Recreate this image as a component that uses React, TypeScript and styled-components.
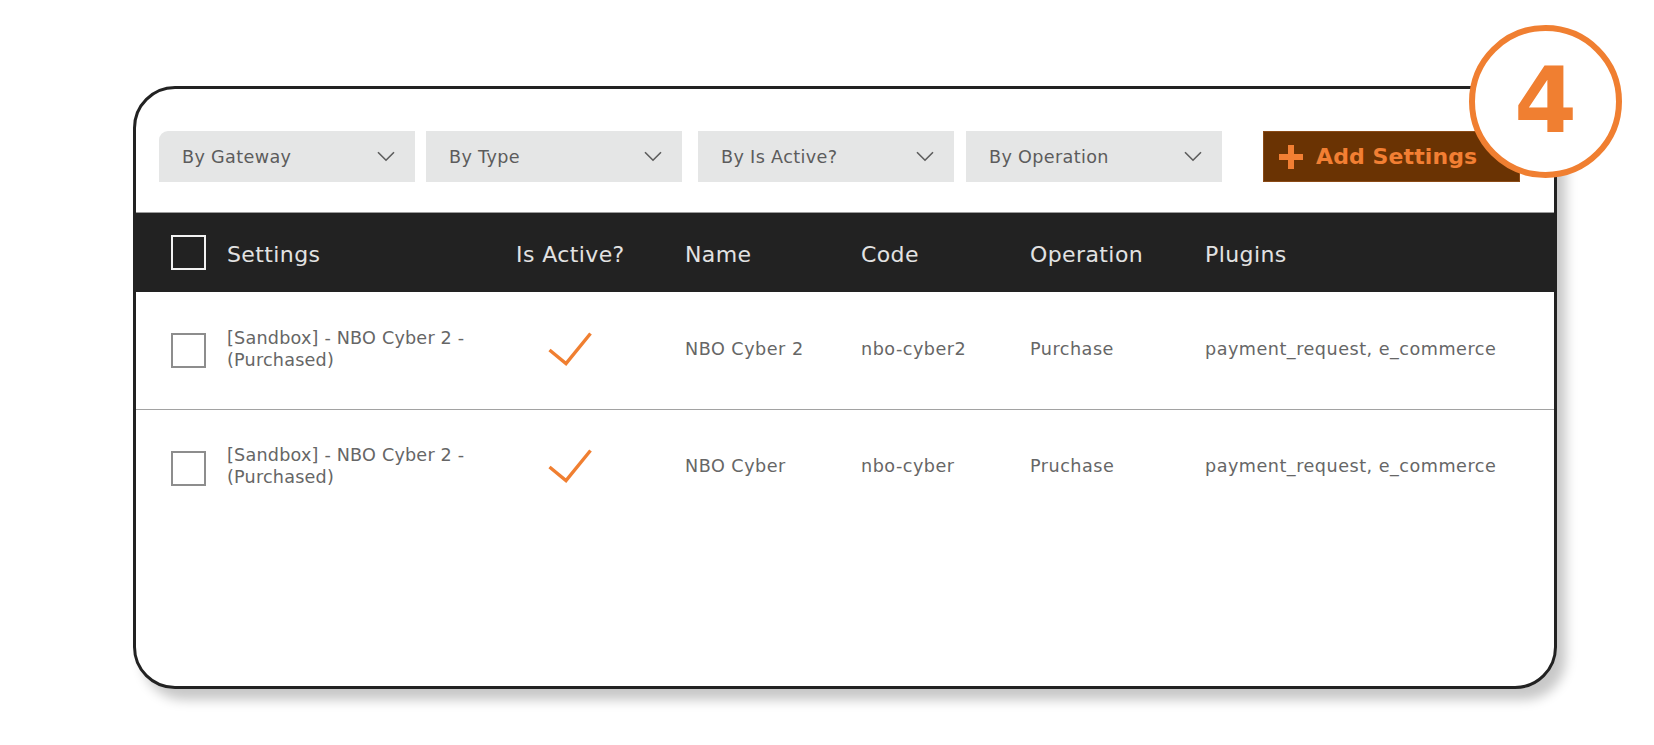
import React from "react";
import styled, { createGlobalStyle } from "styled-components";

const GlobalStyle = createGlobalStyle`
  html, body { margin: 0; padding: 0; background: #ffffff; }
  body { font-family: "DejaVu Sans", "Noto Sans", sans-serif; }
  * { box-sizing: border-box; }
`;

const Page = styled.div`
  width: 1654px;
  height: 745px;
  padding: 86px 0 0 133px;
  background: #ffffff;
`;

const Card = styled.div`
  position: relative;
  width: 1424px;
  height: 603px;
  border: 3px solid #222222;
  border-radius: 42px;
  background: #ffffff;
  box-shadow: 9px 11px 12px rgba(0, 0, 0, 0.22);
  display: flex;
  flex-direction: column;
`;

const Toolbar = styled.div`
  display: flex;
  align-items: stretch;
  height: 51px;
  margin: 42px 0 30px 23px;
`;

const Filter = styled.div<{ $offset: number; $first?: boolean }>`
  width: 256px;
  margin-left: ${(p) => p.$offset}px;
  background: #e5e6e6;
  border-top-left-radius: ${(p) => (p.$first ? "9px" : "0")};
  display: flex;
  align-items: center;
  justify-content: space-between;
  padding: 0 20px 0 23px;
  font-size: 17.6px;
  color: #5c5c5c;
  letter-spacing: 0.35px;
`;

const AddButton = styled.button`
  width: 257px;
  margin-left: 41px;
  background: #6a3303;
  border: 1px solid #8a4a16;
  display: flex;
  align-items: center;
  gap: 13px;
  padding: 0 0 0 15px;
  color: #f27f33;
  font-family: "DejaVu Sans", "Noto Sans", sans-serif;
  font-weight: 700;
  font-size: 22px;
  letter-spacing: 0.1px;
  cursor: pointer;
`;

const Badge = styled.div`
  position: absolute;
  left: 1333px;
  top: -64px;
  width: 153px;
  height: 153px;
  border-radius: 50%;
  border: 6.5px solid #f07f31;
  background: #ffffff;
  display: flex;
  align-items: center;
  justify-content: center;
  color: #f07f31;
  font-family: "DejaVu Sans", "Noto Sans", sans-serif;
  font-weight: 700;
  font-size: 90px;
  line-height: 1;
  padding-bottom: 2px;
`;

const columns = "56px 289px 169px 176px 169px 175px 1fr";

const HeaderRow = styled.div`
  display: grid;
  grid-template-columns: ${columns};
  align-items: center;
  height: 80px;
  padding-left: 35px;
  background: #222222;
  border-top: 1px solid #9c9c9c;
  color: #e2e2e2;
  font-size: 22px;
  letter-spacing: 0.4px;
`;

const HeadCell = styled.span`
  padding-top: 3px;
`;

const BodyRow = styled.div`
  display: grid;
  grid-template-columns: ${columns};
  align-items: center;
  height: 117px;
  padding-left: 35px;
  color: #666666;
  font-size: 17.6px;
  letter-spacing: 0.5px;
  & + & {
    border-top: 1.5px solid #a2a2a2;
  }
`;

const Cell = styled.div`
  padding-bottom: 4px;
  white-space: nowrap;
`;

const Box = styled.span<{ $light?: boolean }>`
  display: block;
  width: 35px;
  height: 35px;
  border: 2px solid ${(p) => (p.$light ? "#f2f2f2" : "#8d8d8d")};
`;

const TwoLine = styled.div`
  padding-bottom: 4px;
  line-height: 22px;
  letter-spacing: 0.2px;
`;

const CheckCell = styled.div`
  padding-left: 32px;
  padding-bottom: 4px;
  display: flex;
  align-items: center;
`;

const Chevron = () => (
  <svg width="18" height="11" viewBox="0 0 18 11" fill="none">
    <path d="M1 1.2 L9 9.2 L17 1.2" stroke="#5c5c5c" strokeWidth="1.6" />
  </svg>
);

const Check = () => (
  <svg width="44" height="34" viewBox="0 0 44 34" fill="none">
    <path d="M1.5 18 L18 31.5 L42.5 1.5" stroke="#f07f31" strokeWidth="3.4" />
  </svg>
);

const Plus = () => (
  <svg width="24" height="24" viewBox="0 0 24 24">
    <rect x="9" y="0" width="6" height="24" fill="#f27f33" />
    <rect x="0" y="9" width="24" height="6" fill="#f27f33" />
  </svg>
);

const rows = [
  { name: "NBO Cyber 2", code: "nbo-cyber2", op: "Purchase" },
  { name: "NBO Cyber", code: "nbo-cyber", op: "Pruchase" },
];

const filters = [
  { label: "By Gateway", offset: 0 },
  { label: "By Type", offset: 11 },
  { label: "By Is Active?", offset: 16 },
  { label: "By Operation", offset: 12 },
];

const headers = ["Settings", "Is Active?", "Name", "Code", "Operation", "Plugins"];

export default function App() {
  return (
    <>
      <GlobalStyle />
      <Page>
        <Card>
          <Toolbar>
            {filters.map((f, i) => (
              <Filter key={f.label} $offset={f.offset} $first={i === 0}>
                <span>{f.label}</span>
                <Chevron />
              </Filter>
            ))}
            <AddButton>
              <Plus />
              <span>Add Settings</span>
            </AddButton>
          </Toolbar>
          <HeaderRow>
            <Box $light />
            {headers.map((h) => (
              <HeadCell key={h}>{h}</HeadCell>
            ))}
          </HeaderRow>
          {rows.map((r) => (
            <BodyRow key={r.code}>
              <Box />
              <TwoLine>
                [Sandbox] - NBO Cyber 2 -<br />
                (Purchased)
              </TwoLine>
              <CheckCell>
                <Check />
              </CheckCell>
              <Cell>{r.name}</Cell>
              <Cell>{r.code}</Cell>
              <Cell>{r.op}</Cell>
              <Cell>payment_request, e_commerce</Cell>
            </BodyRow>
          ))}
          <Badge>4</Badge>
        </Card>
      </Page>
    </>
  );
}
